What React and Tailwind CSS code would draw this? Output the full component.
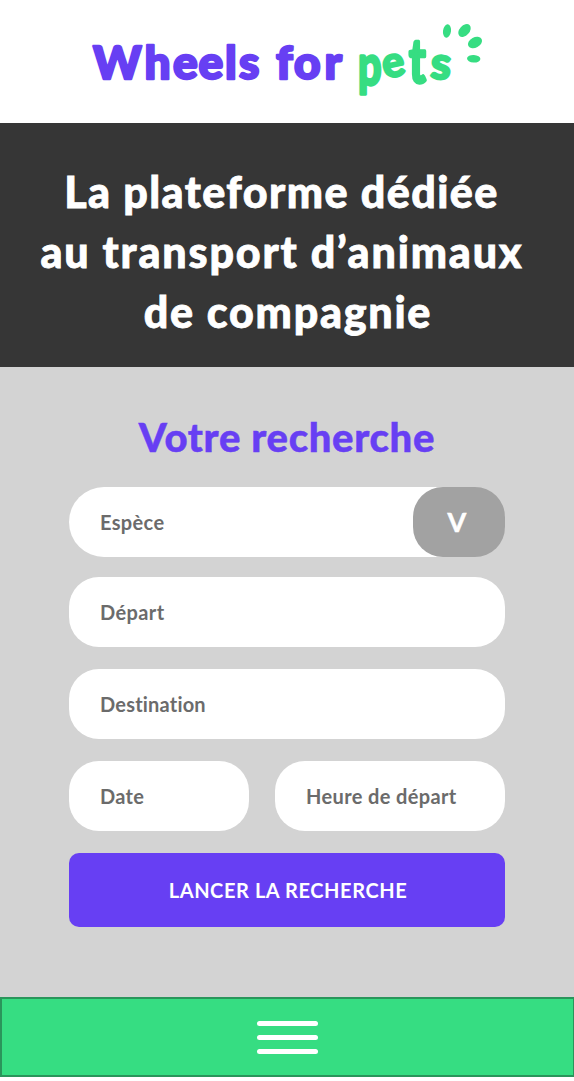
function Logo() {
  return (
    <svg viewBox="0 0 400 90" className="h-[90px] w-[400px]" role="img" aria-label="Wheels for pets">
      <g fontFamily="Lato, sans-serif" strokeLinejoin="round" strokeLinecap="round">
        <g fontSize="46" fontWeight="900" fill="#673ff3" stroke="#673ff3" strokeWidth="2.400">
          <text x="6 57.500 86 111.500 138 152" y="67">Wheels</text>
          <text x="189 207 237.500" y="67">for</text>
        </g>
        <g fill="#36dd82" stroke="#36dd82" strokeWidth="2.600" fontWeight="700">
          <text transform="translate(271 73) scale(.94 1.26)" fontSize="44">p</text>
          <text transform="translate(298 66.500) rotate(-12) scale(.98 1)" fontSize="42">e</text>
          <text transform="translate(322 70.500) scale(1 1.34)" fontSize="45">t</text>
          <text transform="translate(343 66) rotate(4) scale(1.06 1.03)" fontSize="43">s</text>
        </g>
      </g>
      <g fill="#36dd82">
        <ellipse cx="360" cy="19" rx="4" ry="6.700" transform="rotate(8 360 19)" />
        <ellipse cx="377.500" cy="18.500" rx="5" ry="7.500" transform="rotate(42 377.500 18.500)" />
        <ellipse cx="388" cy="30.500" rx="5.200" ry="7.500" transform="rotate(62 388 30.500)" />
        <ellipse cx="386.700" cy="46.700" rx="6.700" ry="3.800" transform="rotate(3 386.700 46.700)" />
      </g>
    </svg>
  );
}

function Field({ label, className }) {
  return (
    <div className={`flex h-[70px] items-center rounded-[30px] bg-white pl-[31px] text-xl font-bold text-[#6b6b6b] ${className}`}>
      {label}
    </div>
  );
}

export default function App() {
  return (
    <div className="flex h-[1081px] w-[574px] flex-col overflow-hidden bg-white font-['Lato',sans-serif]">
      <header className="h-[123px] pt-[12px] pl-[87px]">
        <Logo />
      </header>
      <section className="flex h-[244px] flex-col items-center bg-[#363636] pt-[39px] text-[43px] leading-[60px] font-black whitespace-nowrap text-white [-webkit-text-stroke:0.8px_white] [stroke-linejoin:round]">
        <h1 className="flex flex-col items-center">
          <span className="mr-[11px] tracking-[1.45px]">La plateforme dédiée</span>
          <span className="mr-[10px] tracking-[1.85px]">au transport d’animaux</span>
          <span className="-mr-[2px] tracking-[1.75px]">de compagnie</span>
        </h1>
      </section>
      <main className="flex h-[630px] flex-col bg-[#d3d3d3] px-[69px] pt-[45px]">
        <h2 className="h-[75px] text-center text-[40px] leading-[50px] font-black tracking-[0.7px] text-[#673ff3] [-webkit-text-stroke:0.5px_#673ff3]">Votre recherche</h2>
        <div className="flex h-[70px] justify-between rounded-[36px] bg-white pl-[31px] text-xl font-bold tracking-[0.35px] text-[#6b6b6b]">
          <span className="self-center">Espèce</span>
          <button className="flex w-[92px] items-center justify-center rounded-[30px] bg-[#a2a2a2] pr-1 text-[27px] text-white [-webkit-text-stroke:0.5px_white]">V</button>
        </div>
        <Field label="Départ" className="mt-[20px] tracking-[0.4px]" />
        <Field label="Destination" className="mt-[22px] tracking-[0.2px]" />
        <div className="mt-[22px] flex gap-[26px]">
          <Field label="Date" className="w-[180px] tracking-[0.3px]" />
          <Field label="Heure de départ" className="w-[230px] tracking-[0.37px]" />
        </div>
        <button className="mt-[22px] h-[74px] rounded-[10px] bg-[#673ff3] pl-[2px] text-xl font-bold tracking-[0.58px] text-white">LANCER LA RECHERCHE</button>
      </main>
      <nav className="flex h-[80px] flex-col items-center justify-center gap-[9px] border-2 border-r border-[#2a955b] bg-[#36dd82]">
        <span className="h-[5px] w-[61px] rounded-full bg-white" />
        <span className="h-[5px] w-[61px] rounded-full bg-white" />
        <span className="h-[5px] w-[61px] rounded-full bg-white" />
      </nav>
    </div>
  );
}
